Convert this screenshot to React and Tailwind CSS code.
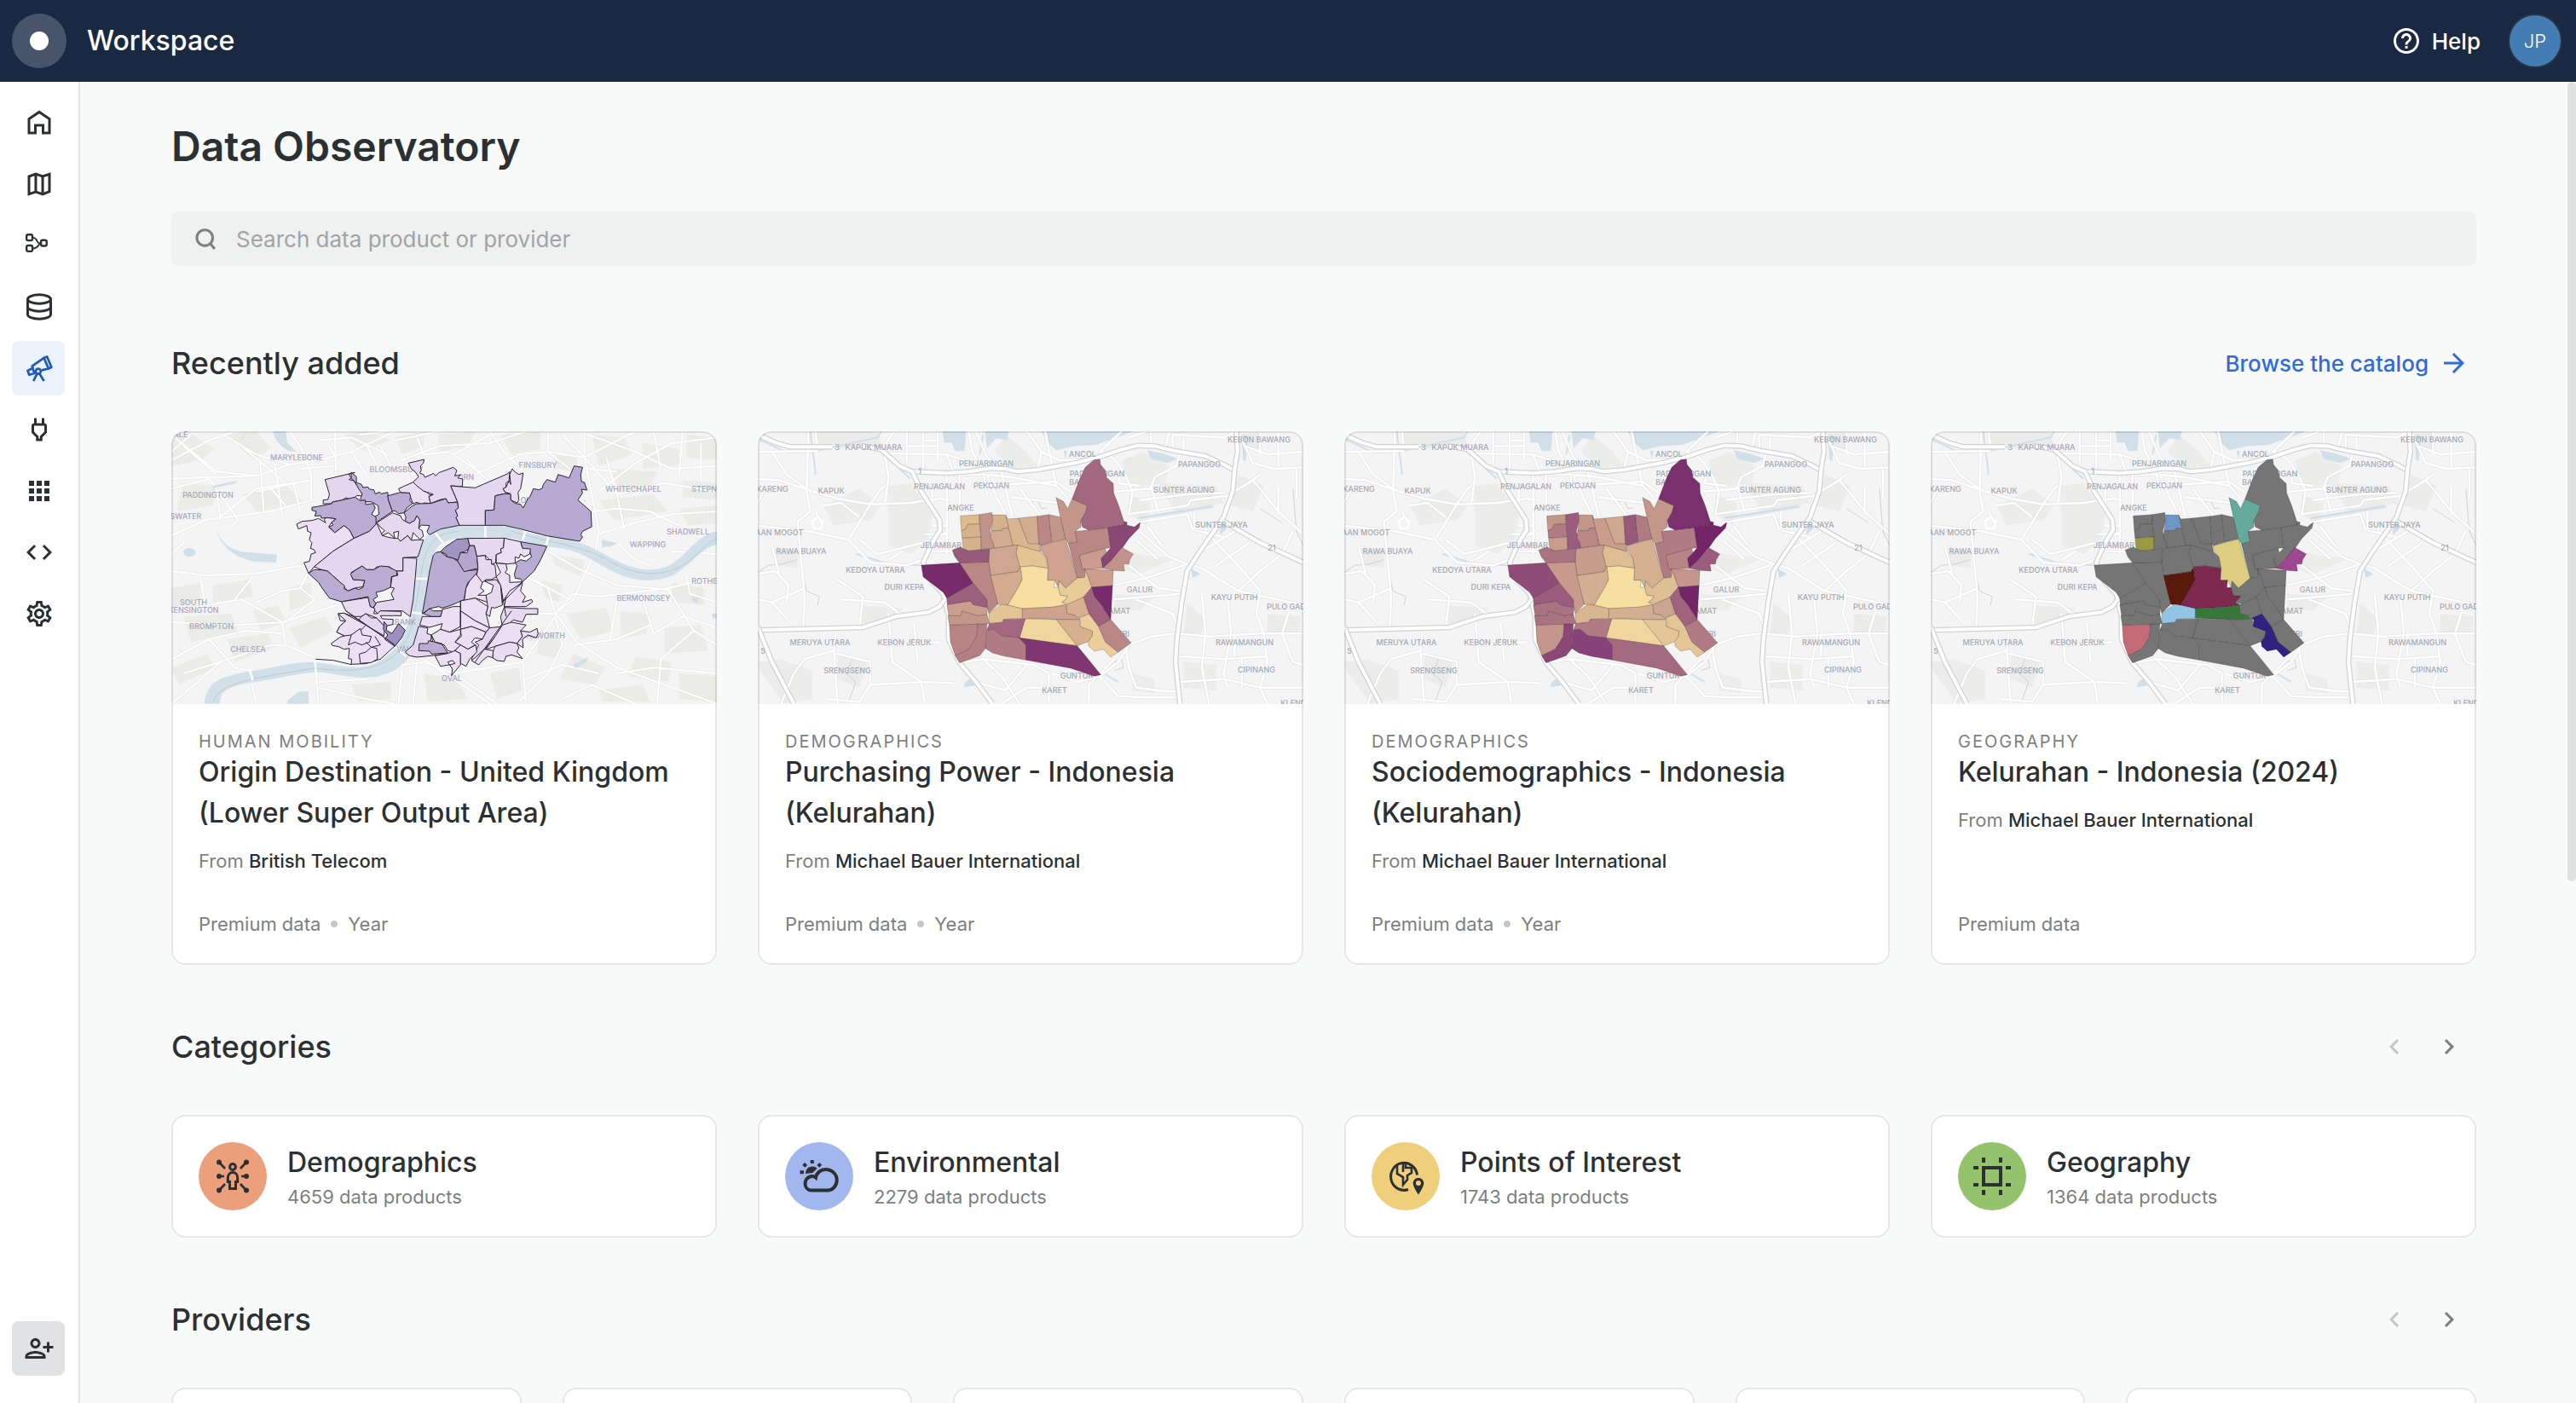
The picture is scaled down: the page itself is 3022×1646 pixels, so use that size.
import React, { useState } from 'react';
import {
  MdApps,
  MdArrowForward,
  MdChevronLeft,
  MdChevronRight,
  MdCode,
  MdHelpOutline,
  MdOutlinePower,
  MdOutlineSettings,
} from 'react-icons/md';

/* ---------- sidebar icons ---------- */

function StrokeIcon({ children }) {
  return (
    <svg viewBox="0 0 24 24" className="size-9" fill="none" stroke="currentColor" strokeWidth="2">
      {children}
    </svg>
  );
}

const HomeIcon = () => (
  <StrokeIcon>
    <path d="M4 20V9l8-5.4L20 9v11h-5v-6h-6v6z" />
  </StrokeIcon>
);

const MapIcon = () => (
  <StrokeIcon>
    <path d="M4 6 9.3 4l5.4 2L20 4.2v13.6L14.7 20l-5.4-2L4 19.8zM9.3 4v14M14.7 6v14" />
  </StrokeIcon>
);

const WorkflowIcon = () => (
  <StrokeIcon>
    <g strokeWidth="1.6">
      <rect x="2.1" y="3.5" width="4.6" height="4.6" rx="1.2" />
      <rect x="2.1" y="12" width="4.6" height="4.6" rx="1.2" />
      <rect x="13.4" y="7.8" width="4.4" height="4.5" rx="1.2" />
      <path strokeWidth="1.3" d="M7.400 5.900c3 0 2.800 4.200 4.300 4.200s-1.300 4.200-4.300 4.200M11.500 10.100h1.600" />
    </g>
  </StrokeIcon>
);

const DatabaseIcon = () => (
  <StrokeIcon>
    <ellipse cx="12" cy="6" rx="9" ry="3.5" />
    <path d="M3 6v12c0 1.9 4 3.5 9 3.5s9-1.6 9-3.5V6M3 12c0 1.9 4 3.5 9 3.5s9-1.6 9-3.5" />
  </StrokeIcon>
);

const TelescopeIcon = () => (
  <StrokeIcon>
    <g strokeWidth="1.8" strokeLinejoin="round">
      <path d="M15.7 3.9 18.1 3l3.5 8.2-2.3 1.100z" />
      <path d="M15.7 3.9 6.4 10.4l.9 2M13.8 13.6l5.5-1.3" />
      <path d="M6.8 12 2.9 13.9l1.3 3.3L8.3 16z" />
      <circle cx="11.2" cy="14.4" r="2" />
      <path d="M10.3 16.2 7.5 22M12.2 16.2 15.7 22" />
    </g>
  </StrokeIcon>
);

const InviteIcon = () => (
  <svg viewBox="0 0 24 24" className="size-9" fill="currentColor">
    <path d="M9 12c2.21 0 4-1.79 4-4s-1.79-4-4-4-4 1.79-4 4 1.79 4 4 4zm0-6c1.1 0 2 .9 2 2s-.9 2-2 2-2-.9-2-2 .9-2 2-2zm0 8c-2.67 0-8 1.34-8 4v2h16v-2c0-2.66-5.33-4-8-4zm-6 4c.22-.72 3.31-2 6-2 2.7 0 5.8 1.29 6 2H3zM20 10V7h-2v3h-3v2h3v3h2v-3h3v-2h-3z" />
  </svg>
);

const SearchIcon = () => (
  <StrokeIcon>
    <circle cx="11.5" cy="11.3" r="6.2" />
    <path d="m15.8 15.8 3.4 4.2" />
  </StrokeIcon>
);

/* ---------- category icons ---------- */

const DemographicsIcon = () => (
  <svg viewBox="0 0 48 48" className="size-12" fill="none" stroke="currentColor" strokeWidth="3">
    <circle cx="24" cy="13" r="3.4" />
    <path d="M24 19.5c-3.6 0-5.7 2.8-5.7 6.5v4.5h2.2v8h7v-8h2.2V26c0-3.7-2.1-6.5-5.7-6.5z" />
    <path d="M8 7.5l7 7.5M40 7.5 33 15M8 24h6M40 24h-6M8 40.5l7-7.5M40 40.5 33 33" strokeWidth="2.6" />
    <g fill="currentColor" stroke="none">
      <circle cx="8" cy="7.5" r="3" />
      <circle cx="40" cy="7.5" r="3" />
      <circle cx="8" cy="24" r="3" />
      <circle cx="40" cy="24" r="3" />
      <circle cx="8" cy="40.5" r="3" />
      <circle cx="40" cy="40.5" r="3" />
    </g>
  </svg>
);

const EnvironmentalIcon = () => (
  <svg viewBox="0 0 48 48" className="size-12" fill="none" stroke="currentColor" strokeWidth="4">
    <path d="M15 40.5c-4.5 0-7.5-3.3-7.5-8s3.5-8.5 8.500-8.5c1.800 0 3 .6 4 1.500C21 19.800 26 16 31.500 16 39 16 44.700 21.500 44.700 28.500S39.500 40.500 34 40.500z" />
    <path d="M8 21c0-5 3-8.500 8-8.500 2.300 0 4.300.8 5.500 2.200L16.500 20z" fill="currentColor" stroke="none" />
    <path d="M15.800 5v4M1.500 19.200h4.500M5.700 9.300l3 3M25.800 9.300l-3 3" />
  </svg>
);

const PoiIcon = () => (
  <svg viewBox="0 0 48 48" className="size-12" fill="none" stroke="currentColor" strokeWidth="3">
    <path d="M37.5 22.5A15.5 16 0 1 0 27 39.5" />
    <path d="M14 10v11l7 4v9l5-6v-5l5-3v-6h-7V8M21 8v11" strokeWidth="2.6" />
    <path
      d="M39 26c-3.7 0-6.3 2.7-6.3 6.2 0 4.3 6.3 13.3 6.3 13.3s6.3-9 6.3-13.3C45.3 28.7 42.7 26 39 26zm0 9a3 3 0 1 1 0-6 3 3 0 0 1 0 6z"
      fill="currentColor"
      stroke="none"
    />
  </svg>
);

const GeographyIcon = () => (
  <svg viewBox="0 0 48 48" className="size-12" fill="none" stroke="currentColor" strokeWidth="4">
    <path d="M14 14h20v20H14zM14 2v6M34 2v6M14 40v6M34 40v6M2 14h6M40 14h6M2 34h6M40 34h6" />
  </svg>
);

/* ---------- map previews ---------- */

function MapLabels({ labels, color }) {
  return (
    <g fill={color} fontSize="9" fontWeight="500" fontFamily="Inter, sans-serif" textAnchor="middle">
      {labels.map(([text, x, y], i) => (
        <text key={i} x={x} y={y}>
          {text}
        </text>
      ))}
    </g>
  );
}

const jakartaLabels = [
  ['3', 93, 22],
  ['KAPUK MUARA', 136, 22],
  ['KEBON BAWANG', 588, 13],
  ['ANCOL', 381, 30],
  ['PENJARINGAN', 268, 41],
  ['PAPANGGO', 518, 42],
  ['1', 190, 50],
  ['PADEMANGAN', 398, 53],
  ['BARAT', 380, 63],
  ['KARENG', 17, 71],
  ['KAPUK', 86, 73],
  ['PENJAGALAN', 213, 68],
  ['PEKOJAN', 274, 67],
  ['SUNTER AGUNG', 500, 72],
  ['ANGKE', 238, 93],
  ['SUNTER JAYA', 544, 113],
  ['DAAN MOGOT', 22, 122],
  ['JELAMBAR', 215, 137],
  ['RAWA BUAYA', 51, 144],
  ['21', 603, 140],
  ['KEDOYA UTARA', 138, 166],
  ['DURI KEPA', 172, 186],
  ['GALUR', 448, 189],
  ['KAYU PUTIH', 559, 198],
  ['KRAMAT', 418, 214],
  ['PULO GADUNG', 630, 209],
  ['MERUYA UTARA', 73, 251],
  ['KEBON JERUK', 172, 251],
  ['RAWAMANGUN', 571, 251],
  ['MATRI', 422, 241],
  ['5', 6, 261],
  ['SRENGSENG', 105, 284],
  ['GUNTUR', 374, 290],
  ['CIPINANG', 585, 283],
  ['KARET', 348, 307],
  ['KLENDER', 634, 322],
];

// district outlines, shared by the three Jakarta previews
const districts = {
  angke1: '577,346 629,341 630,374 597,376 592,392 580,398',
  angke2: '580,398 592,392 597,376 630,374 634,420 582,424',
  angke3: '582,424 634,420 634,464 600,469 585,462',
  duri: '629,341 664,334 666,360 658,400 668,440 670,460 634,464 634,420 630,374',
  tambora1: '666,342 702,343 710,388 694,390 692,397 662,399 666,360',
  tambora2: '662,399 692,397 694,390 710,388 722,450 670,460 668,440 660,425',
  tambora3: '702,343 707,357 737,354 752,405 764,443 793,444 797,472 735,449 722,450 710,388',
  glodok1: '737,354 788,347 793,444 764,443 752,405',
  glodok2: '788,347 820,341 828,438 797,451 793,444',
  mangga1: '820,341 852,350 866,427 828,438',
  mangga2: '840,281 860,295 872,320 884,286 926,310 920,335 908,362 908,385 892,400 898,437 874,444 866,427 852,350',
  ancol: '884,286 905,215 920,175 945,148 960,146 962,165 975,185 978,210 997,232 998,265 1012,310 1026,365 1028,377 982,388 930,396 912,385 908,362 920,335 926,310',
  sawah: '892,400 930,396 982,388 990,458 975,460 904,485 912,530 919,534 919,562 898,565 874,444 898,437',
  sunter: '982,388 1028,377 1026,365 1035,368 1034,378 1055,385 1071,368 1068,388 1040,425 1020,462 990,505 968,530 963,495 975,480 990,458',
  cempaka: '1020,457 1052,480 1042,500 1040,515 1025,515 1028,540 1000,538 968,530 990,505',
  utan: '904,485 975,460 978,475 963,495 968,530 912,534',
  gambir: '797,451 866,427 898,565 866,600 848,575 846,598 836,572 816,572 818,530 812,490 797,465',
  petojo: '735,449 797,472 812,490 818,530 775,522 740,525 730,475',
  cideng: '657,462 722,450 735,449 730,475 740,525 735,542 660,556 655,508',
  tanah: '660,556 735,542 742,525 747,570 735,600 707,660 680,657 668,610',
  kebon: '742,525 775,522 818,530 816,572 836,572 834,598 846,598 852,625 872,628 866,640 856,650 870,658 830,667 747,672 707,660 735,600 747,570',
  senen: '919,532 928,560 938,597 915,632 875,655 856,650 866,640 872,628 852,625 846,598 848,575 866,600 898,565 919,562',
  johar1: '919,532 997,538 995,591 938,597 928,560',
  johar2: '938,597 995,591 990,710 965,660 945,630',
  johar3: '938,597 945,630 965,660 990,710 956,735 930,690 915,632',
  matraman: '990,710 1046,793 1010,826 975,790 956,735',
  manggarai: '930,690 956,735 975,790 1010,826 990,843 970,815 945,822 930,805 928,788 938,770 940,752 905,735 908,712 902,705',
  cikini: '866,660 875,655 915,632 930,690 902,705 890,695 870,690',
  menteng: '747,672 830,667 868,658 870,690 890,695 905,710 840,710 747,706',
  bendungan: '655,688 690,657 707,660 747,672 747,706 696,710 694,720 657,725',
  karet: '755,708 840,710 898,803 738,775',
  guntur1: '840,710 905,712 905,735 940,752 938,770 928,788 898,803',
  gelora: '657,725 694,720 696,710 755,708 740,775 690,768 668,745 650,748',
  senayan1: '650,748 668,745 690,768 738,775 757,800 757,853 700,840 665,828 646,812',
  senayan2: '738,775 898,803 963,905 945,910 880,882 757,853 757,800',
  grogol1: '547,730 625,726 622,770 613,790 600,815 563,838 550,790',
  grogol2: '625,726 650,725 646,812 630,838 575,863 563,838 600,815 613,790 622,770',
  palmerah1: '543,697 578,697 582,680 625,697 650,692 657,725 547,730',
  palmerah2: '540,658 605,645 612,658 652,668 650,692 625,697 582,680 578,697 545,697',
  slipi: '540,635 612,582 650,640 652,668 612,658 605,645 542,658',
  kepa: '470,519 575,511 612,582 540,635 530,615 475,560',
  tomang: '575,511 655,508 660,556 680,657 655,688 652,668 650,640 612,582',
  jelambar: '555,466 578,455 585,462 600,469 657,462 655,508 575,511 562,490',
};

const purchasingColors = {
  angke1: '#debb8d', angke2: '#d6b18e', angke3: '#d6b18e', duri: '#c0938a', tambora1: '#d6b18e',
  tambora2: '#d2ac90', tambora3: '#d9b590', glodok1: '#d2ac8f', glodok2: '#b98785', mangga1: '#c49689',
  mangga2: '#c49689', ancol: '#a3687d', sawah: '#b98785', sunter: '#894774', cempaka: '#c1918a',
  utan: '#c99c8d', gambir: '#cfa28f', petojo: '#e4c494', cideng: '#cfa790', tanah: '#d3ac90',
  kebon: '#f6dea0', senen: '#e8cb98', johar1: '#cb9e8e', johar2: '#782b6b', johar3: '#a0627d',
  matraman: '#b98785', manggarai: '#ebce9b', cikini: '#d6b08f', menteng: '#cfa28f', bendungan: '#e4c494',
  karet: '#f0d69d', guntur1: '#d6b08f', gelora: '#a3677f', senayan1: '#b17b83', senayan2: '#803670',
  grogol1: '#b98485', grogol2: '#b47f83', palmerah1: '#c49689', palmerah2: '#cb9e8e', slipi: '#9c5f7d',
  kepa: '#782b6b', tomang: '#b98785', jelambar: '#985a7b',
};

const socioColors = {
  angke1: '#c49689', angke2: '#b17b83', angke3: '#c99c8c', duri: '#9c5c7d', tambora1: '#c49689',
  tambora2: '#b98785', tambora3: '#c99c8c', glodok1: '#cfa88f', glodok2: '#985a7b', mangga1: '#b17b83',
  mangga2: '#c4978b', ancol: '#7b306e', sawah: '#b17b83', sunter: '#742568', cempaka: '#9c5c7d',
  utan: '#b98485', gambir: '#d4af90', petojo: '#dfbd93', cideng: '#c89c8d', tanah: '#d4ae90',
  kebon: '#f6dea0', senen: '#dfbf94', johar1: '#c4968b', johar2: '#742568', johar3: '#a0627d',
  matraman: '#b17b83', manggarai: '#e4c598', cikini: '#cba48f', menteng: '#d4ae90', bendungan: '#d9b691',
  karet: '#f0d69d', guntur1: '#e4c598', gelora: '#b17b83', senayan1: '#87427a', senayan2: '#a46a80',
  grogol1: '#c4968b', grogol2: '#8c4776', palmerah1: '#aa7381', palmerah2: '#aa7381', slipi: '#9c5c7d',
  kepa: '#8f4c77', tomang: '#c89a8d', jelambar: '#aa7381',
};

const geographyColors = {
  angke3: '#999a43', tambora1: '#7096c8', mangga2: '#63aa9a', cempaka: '#9c4790', gambir: '#dccd80',
  tanah: '#5b190b', kebon: '#7d2950', menteng: '#38773a', bendungan: '#92c4e8', manggarai: '#32227f',
  grogol1: '#c26a76',
};

const jakartaStreets = [
  'M21 215 80 220 160 255 240 285 330 305 360 250 370 240',
  'M160 48 155 260 165 330 130 365',
  'M185 110 180 48M21 120 185 118',
  'M330 305 440 300 520 285 545 290',
  'M330 305 270 430 160 400 21 380',
  'M270 430 330 510 430 520 475 500',
  'M300 430 350 480 475 440',
  'M21 550 70 540 105 590 100 650',
  'M130 365 140 500 150 640 145 750',
  'M240 570 310 630 300 735',
  'M250 640 370 650 420 700',
  'M21 640 60 650 110 720M60 650 150 600',
  'M85 1007 120 900 150 850 230 820 235 760',
  'M230 820 240 1007M235 830 330 860 330 940 480 930 560 935',
  'M380 690 390 860 470 930 480 1007M390 800 520 790',
  'M330 940 300 1000 210 990M450 720 460 860',
  'M430 48V160M475 48V190M515 48V150M475 80H515M430 100H515M360 125 540 130 590 150',
  'M370 130 380 210 370 300M395 48 360 115',
  'M600 48 610 120 640 190 650 270M620 48 650 140 690 180',
  'M540 130 560 200 640 200 720 210 840 240',
  'M500 230V300M540 200V480M575 200V340M500 380 540 380M500 470 550 470M480 410H540',
  'M650 200 680 290 705 350M690 190 720 350M720 280 845 300M740 250 800 350',
  'M640 240 840 225 880 260M810 48 840 240 870 280',
  'M760 48 800 120 850 150 950 145M800 120 790 180',
  'M1020 48 960 120 1000 145 1020 180 1010 230 1070 240',
  'M1040 70 1090 48M1100 100 1100 48M1140 110 1150 48',
  'M1160 60 1300 70 1330 50M1160 60V110M1190 70V115',
  'M1000 260 1100 250 1110 210 1170 170 1180 125',
  'M1030 200 1050 260 1040 340M1040 340 1200 310 1210 290 1310 275',
  'M1060 370 1200 340 1215 395 1300 420M1100 240 1120 330',
  'M1220 330V390M1070 290 1200 270 1300 265',
  'M1070 400 1150 490 1200 515M1090 380 1130 450M1060 430 1120 500',
  'M1200 515 1100 560 1000 590M1200 515 1240 530 1340 610 1519 660',
  'M1040 520 1120 600 1180 610M1000 640 1180 620',
  'M1340 610 1400 540 1460 480 1490 400M1300 370 1310 275 1380 220 1400 200',
  'M1340 50 1380 160 1440 180 1519 175M1360 100 1420 130 1519 120M1400 48V130M1450 48V170',
  'M1380 220 1450 330 1519 410M1450 240V340M1500 180V280',
  'M1250 400 1340 520 1400 610M1240 470 1330 400M1280 520 1370 440',
  'M1060 640 1160 690 1180 760M1040 800 1100 770 1170 760 1260 770 1400 760 1519 760',
  'M1240 620 1250 760 1240 880 1260 1007M1310 620 1320 760 1300 900 1310 950',
  'M1400 610 1390 690 1410 760 1420 860 1400 950 1420 1007M1480 680 1460 760 1490 860 1519 870',
  'M1180 840 1300 850 1420 840M1180 930 1300 920 1400 950 1519 950M1330 760V840M1350 850V950',
  'M1030 800 1040 880 1060 950 1120 960 1180 965M1000 850 930 940 930 1007',
  'M575 863 640 850 780 870 820 900 820 1007M640 850 690 910 740 1007',
  'M620 930 700 960 740 900 760 870M690 1007 760 950 830 950',
  'M830 900 900 930 960 910 1010 860 1040 800M960 910 1010 980 1090 985 1180 985',
  'M545 400 500 430M380 500 420 470M60 120 100 200 160 255',
  'M200 310 250 300 300 350M40 250 21 300M60 450 80 550M180 330 200 380',
];

const jakartaHighways = [
  'M21 60 70 88 110 103 225 103M300 98 360 112 410 170 445 190 540 195 600 190 660 178 700 180 735 190 790 183 890 160 960 138 1020 112 1065 98 1110 100 1170 118 1250 135 1300 165 1330 185',
  'M445 190 470 260 520 360 522 395 500 440 475 510 500 580 530 620 545 700 545 780 575 863 620 930 665 1007',
  'M21 748 120 745 310 738 400 700 490 685 520 665 535 640',
  'M1335 48 1338 120 1330 185 1325 260 1300 350 1230 480 1200 540 1185 650 1172 780 1168 860 1180 1007',
  'M1300 365 1400 440 1519 510',
  'M21 735 60 860 120 1007',
];

function JakartaMap({ title, colors }) {
  return (
    <svg viewBox="0 0 640 320" className="block w-full" role="img" aria-label={title}>
      <rect width="640" height="320" fill="#f4f4f4" />
      <g transform="scale(.4273 .3333) translate(-21 -48)" fill="none" strokeLinejoin="round">
        <g fill="#ececea">
          <path d="M180 48h170l10 50-120 10-60-15zM200 310l100-60 60 60-30 50-100 20zM380 240l60-10 60 110-10 90-50 50-60-30zM60 460l70 10v60l-60-10zM21 860l60-10 90 40v100l-80 17-70-130z" />
          <path d="M1020 150l60-30 70 50-10 60-100 20zM1120 230l160 10 20 60-130 40zM1040 270l60 30-10 80-50-40zM1180 490l-110 60-60-20 30-60 60 20zM1340 200l70 40-30 90-60-20zM1200 650l50 60-10 50h-50zM1190 860l90 10v90l-90-10zM1420 690l90 10v60h-90zM1340 60l60-10v60h-50z" />
          <path d="M700 60l60 60 30 50-70 10-50-60zM300 660l120 10-30 40-80 20zM240 830l80 30-20 90-60-30zM1000 620l110 10-40 50-70-10zM1050 900l60 20v50l-60-10z" />
        </g>
        <g fill="#d1dfe8">
          <path d="M528 48h65l-5 70h-25l-10-30h-20zM645 48h65l-5 30-30-5-25 35zM800 48h250l-50 25-50 22-60 5-50 15-25-30zM1090 115l40 10 45 20-30 15-45-15zM1065 350l200-42 10 8-210 42zM1290 370l25 10-25 35zM1210 530l25 20-20 15zM590 930l15-12 12 25-30 5zM1475 840l22 20-5 10z" />
          <path d="M1352 60l16 5-8 90-8-10zM860 115l10 5-5 25z" />
        </g>
        <path
          vectorEffect="non-scaling-stroke"
          stroke="#d1dfe8"
          strokeWidth="2"
          d="M21 75 100 122 170 120 350 70 360 48M360 120 440 215M290 480 380 515 470 520M165 48 180 200M640 60 630 130M970 900 1010 930"
        />
        <path
          vectorEffect="non-scaling-stroke"
          stroke="#cbd2d6"
          d="M21 545 50 520 90 515 130 500M150 580 155 610 190 630 185 660M740 285 760 280 775 295 790 290 800 320 815 318M1000 860 1020 850 1025 880 1000 890M280 850 265 900 290 930 270 1000M1400 320 1460 370M1490 250 1500 400 1519 450"
        />
        <g stroke="#dcdcdc" strokeWidth="4">
          {jakartaStreets.map((d, i) => (
            <path key={i} d={d} vectorEffect="non-scaling-stroke" opacity=".6" />
          ))}
        </g>
        <g stroke="#ffffff" strokeWidth="2.5">
          {jakartaStreets.map((d, i) => (
            <path key={i} d={d} vectorEffect="non-scaling-stroke" />
          ))}
          <path d="M170 365 185 350 200 365 195 390 175 390z" vectorEffect="non-scaling-stroke" />
        </g>
        {jakartaHighways.map((d, i) => (
          <g key={i}>
            <path d={d} stroke="#d2d2d2" strokeWidth="6.5" vectorEffect="non-scaling-stroke" />
            <path d={d} stroke="#ffffff" strokeWidth="4" vectorEffect="non-scaling-stroke" />
          </g>
        ))}
      </g>
      <MapLabels labels={jakartaLabels} color="#a2a8b2" />
      <g transform="scale(.4273 .3333) translate(-21 -48)" strokeLinejoin="round" stroke="#00000033">
        {Object.entries(districts).map(([name, points]) => (
          <polygon key={name} points={points} fill={colors[name] || '#757575'} vectorEffect="non-scaling-stroke" />
        ))}
      </g>
    </svg>
  );
}

const londonLabels = [
  ['VALE', 8, 7],
  ['MARYLEBONE', 147, 34],
  ['BLOOMSBURY', 264, 48],
  ['FINSBURY', 430, 43],
  ['HOLBORN', 333, 57],
  ['PADDINGTON', 43, 78],
  ['WHITECHAPEL', 542, 71],
  ['STEPNEY', 631, 71],
  ['LONDON', 424, 84],
  ['BAYSWATER', 8, 103],
  ['SHADWELL', 606, 121],
  ['WAPPING', 559, 136],
  ['ROTHERHITHE', 642, 179],
  ['SOUTH', 26, 204],
  ['KENSINGTON', 26, 213],
  ['BERMONDSEY', 554, 199],
  ['BROMPTON', 47, 232],
  ['MILLBANK', 264, 227],
  ['WALWORTH', 435, 243],
  ['CHELSEA', 90, 259],
  ['VAUXHALL', 288, 259],
  ['OVAL', 329, 293],
];

// [fill, outline] for every output area
const outputAreas = [
  ['#e4d6ee', '448,218 530,193 513,200 520,212 514,218 527,222 535,238 545,250 552,276 535,274 522,290 505,282 495,290 468,297 466,303 443,303 443,290 456,288 460,270'],
  ['#bdb1d7', '520,192 534,208 534,228 548,235 552,246 566,244 570,252 582,254 586,268 598,262 602,268 620,263 622,290 633,330 600,358 585,372 580,352 596,340 594,310 575,296 552,296 545,286 550,268 540,250 530,225 520,215'],
  ['#b8acd3', '412,316 430,312 466,303 468,297 495,290 530,280 545,292 558,290 560,306 580,302 586,318 576,340 588,350 588,375 570,400 527,425 515,395 500,380 475,405 466,392 458,385 470,378 466,368 478,356 452,352 438,354 436,345 420,346 424,330 412,326'],
  ['#b8acd3', '620,275 655,263 680,265 685,275 680,290 688,302 672,318 665,335 650,338 640,328 633,330 622,290'],
  ['#ecdff3', '650,250 690,227 700,240 712,245 718,258 727,262 735,272 745,270 733,278 738,302 720,300 714,306 700,298 690,303 684,285 680,265 655,263'],
  ['#e4d6ee', '677,160 720,147 718,160 710,170 712,185 708,195 718,200 722,210 740,200 745,196 752,205 760,194 800,175 810,186 804,205 820,202 812,212 826,216 825,242 793,240 812,297 786,300 780,285 765,288 738,302 733,278 745,270 727,262 718,258 700,240 690,227 705,208 695,190 685,180'],
  ['#c0b4da', '665,335 688,310 700,303 738,302 780,285 786,300 812,297 814,318 806,326 812,345 808,352 817,379 765,392 735,412 728,402 735,380 712,378 705,390 708,360 700,345 694,362 680,372 668,365 670,350'],
  ['#e4d6ee', '793,240 860,247 950,197 955,190 953,222 945,230 945,245 937,250 942,262 957,268 940,268 915,275 912,325 888,327 888,379 817,379 808,352 812,345 806,326 814,318 812,297'],
  ['#e9dcf1', '962,180 970,192 980,200 992,195 985,250 978,262 980,290 975,300 958,290 957,268 942,262 937,250 945,245 953,222 958,235 955,200'],
  ['#b6aad2', '888,379 888,327 912,325 915,275 940,268 957,268 958,290 970,302 985,305 992,318 1005,285 1010,280 1020,250 1035,254 1045,248 1046,238 1057,218 1080,227 1088,200 1118,212 1132,170 1155,175 1150,200 1152,225 1160,228 1167,255 1152,252 1155,265 1142,290 1178,330 1180,384 1155,400 1150,412 1155,420 1147,435 1057,416 985,392 940,379'],
  ['#e6d9ef', '590,370 633,335 655,345 660,358 668,365 680,372 694,362 700,345 708,360 705,390 715,398 718,418 708,428 690,405 685,432 675,415 655,435 648,425 650,400 636,404 640,425 622,405 605,415 603,408 612,398 600,385'],
  ['#ecdff3', '370,375 385,365 412,362 430,355 450,370 445,358 452,352 478,356 466,368 458,385 475,405 500,380 515,395 527,425 470,470 418,525 403,548 390,510 405,506 410,480 422,475 418,465 408,460 412,440 405,430 410,405 400,400 398,380 375,392'],
  ['#e4d6ee', '418,525 470,470 527,425 570,400 590,372 605,415 625,422 640,425 648,425 655,435 675,415 685,432 700,430 718,430 703,490 662,493 662,540 640,540 625,525 590,525 582,535 562,535 550,522 520,545 525,570 557,573 552,595 530,600 510,610 490,580 455,540 440,536'],
  ['#b8acd3', '403,548 418,535 440,536 455,540 490,580 502,592 500,602 512,610 530,600 540,605 552,598 557,573 525,570 518,550 530,538 550,522 562,535 582,535 600,522 620,524 645,540 645,555 630,560 628,597 610,608 588,615 592,630 580,640 588,655 578,672 568,655 566,630 493,648 460,635 440,600 430,580'],
  ['#e4d6ee', '662,493 700,495 696,560 690,640 682,700 660,680 600,680 592,690 580,672 590,650 637,640 630,620 638,600 628,597 632,560 648,555 645,540 662,540'],
  ['#e9dcf1', '493,648 566,633 572,665 585,672 582,690 592,690 600,680 657,682 657,697 600,697 605,708 635,710 634,728 610,735 600,720 590,705 560,690 548,700 528,700 505,680'],
  ['#ecdff3', '484,690 500,688 525,700 560,730 605,768 640,803 600,850 560,866 520,868 521,850 512,848 515,812 500,815 485,806 468,802 465,795 490,772 502,768 480,755 488,735 505,715 490,715'],
  ['#e4d6ee', '560,690 575,705 590,705 600,720 612,735 610,768 575,742 540,712 548,700'],
  ['#ecdff3', '542,832 560,825 575,808 590,812 592,850 575,862 545,865'],
  ['#9d90c1', '610,718 618,730 616,748 632,760 650,725 668,748 658,775 640,805 612,780 620,765 608,745'],
  ['#a094c3', '765,472 778,455 810,428 840,425 845,450 840,465 830,472 820,475 815,502 800,495 783,490 780,480'],
  ['#b8acd3', '752,475 765,472 783,490 800,495 812,505 830,540 868,535 860,560 840,580 835,600 830,640 795,660 770,670 760,665 735,672 715,690 725,620 735,540 745,485'],
  ['#b3a7cf', '845,450 858,450 865,490 868,530 830,542 812,505 820,475 838,476'],
  ['#e6d9ef', '840,425 940,424 938,458 930,462 932,475 918,482 916,512 905,515 900,500 888,485 865,488 858,450 845,450'],
  ['#e6d9ef', '865,488 888,485 890,500 905,500 905,515 915,520 918,560 905,570 890,570 880,580 862,570 868,530'],
  ['#b8acd3', '985,437 1057,453 1040,500 1022,540 990,578 985,568 970,565 968,550 975,520 970,512 985,500 1000,505 1015,490 1010,470 990,460'],
  ['#ecdff3', '940,424 985,437 990,460 1012,462 1010,480 995,490 985,480 980,495 970,490 970,512 950,515 918,512 918,482 932,475 930,462 938,458'],
  ['#ecdff3', '918,512 945,515 948,535 942,545 955,555 955,580 990,578 970,600 945,630 935,650 930,590 918,560 930,545'],
  ['#ecdff3', '862,550 880,580 875,600 885,610 868,625 890,625 895,650 860,635 830,645 835,600 845,575'],
  ['#e6d9ef', '885,575 918,570 930,590 935,660 915,670 905,668 900,700 890,690 895,665 890,625 905,615 910,590'],
  ['#ecdff3', '955,610 990,580 985,610 998,630 990,650 1015,640 1018,648 1000,665 940,665 945,630'],
  ['#e6d9ef', '1000,672 1032,672 1032,692 1000,692 990,720 965,712 950,730 935,735 930,700 940,668'],
  ['#ecdff3', '820,645 860,635 895,665 890,690 900,740 860,715 820,680'],
  ['#ecdff3', '715,700 765,700 770,675 800,665 820,665 820,735 790,755 765,745 770,725 735,738 708,730'],
  ['#ecdff3', '820,680 860,715 900,740 890,755 850,735 820,745'],
  ['#b8acd3', '718,690 735,672 745,680 770,680 765,700 740,700'],
  ['#e4d6ee', '705,735 730,740 728,760 740,765 738,790 750,800 765,795 785,830 740,838 700,843 680,838 668,825 690,800'],
  ['#ecdff3', '740,765 765,745 790,755 820,745 820,765 805,790 820,800 800,825 785,820 775,800 745,795'],
  ['#ecdff3', '820,745 850,735 890,755 880,780 860,775 850,790 860,800 840,815 820,800 805,790 822,770'],
  ['#e4d6ee', '890,755 900,740 935,735 915,770 890,810 860,860 850,850 870,800 860,790 880,780'],
  ['#ecdff3', '935,730 960,720 1000,730 985,750 990,770 975,795 955,790 915,805 890,815 915,770'],
  ['#ecdff3', '985,750 1010,755 1030,742 1033,760 1028,775 1005,765 990,780 992,810 975,795 990,770'],
  ['#e9dcf1', '915,805 955,790 975,795 980,810 975,825 990,848 960,835 945,840 940,858 920,855 908,845 910,820'],
  ['#ecdff3', '885,815 910,820 908,845 895,840 880,855 870,870 850,855 860,845'],
  ['#ecdff3', '750,838 785,830 805,820 820,830 820,870 810,885 795,908 798,885 790,870 805,865 798,855 785,860 790,870 765,875'],
  ['#ecdff3', '820,800 840,815 862,800 865,825 845,850 835,875 820,865 820,830 805,820'],
  ['#b8acd3', '707,795 730,795 732,785 768,795 778,815 785,828 740,832 735,822 705,820'],
  ['#ecdff3', '484,690 500,688 560,730 545,750 520,765 502,768 480,755 488,735 505,715'],
  ['#ecdff3', '520,765 545,742 550,765 575,770 570,790 548,800 530,790 512,800'],
];

const londonStreets = [
  'M26 215 120 210 260 205 350 165 430 150 520 120 640 48',
  'M26 415 120 360 300 330 410 290 410 200 380 100 350 48',
  'M26 250 130 215 210 360 190 380M150 250 160 350 260 250 360 230',
  'M26 150 130 80 200 48M60 100 150 200M80 60 26 120M26 60 150 190 260 205',
  'M170 60 260 130 350 165M210 90 340 230M475 48 478 200M520 120 560 200',
  'M300 250 340 310M260 260 330 240 410 220M270 150 280 330M310 160 330 340M360 220 380 330',
  'M430 80 520 70 620 130M560 90 590 170M600 100 640 200M540 60 620 48',
  'M700 70 720 130 790 120 870 190M640 80 760 48M660 150 760 100 900 90 1000 48',
  'M800 130 900 60M840 150 900 230M860 200 980 130 1060 120 1160 140 1300 48',
  'M900 48 940 120 1000 200M1060 48 1060 120 1120 180M1100 60 1160 140 1200 400',
  'M1160 48V140L1250 270 1380 230 1524 260M1200 260 1300 160 1400 90 1524 70',
  'M1170 60 1300 120 1400 180 1524 170M1350 48 1370 180M1430 48 1420 200M1480 90V220',
  'M1200 410 1300 370 1400 340 1524 330M1170 180 1250 190M1220 140 1250 270 1270 400',
  'M1180 330 1250 320 1340 330 1420 380M1200 400 1190 470 1130 640 1080 690',
  'M1080 690 1000 690M1080 690 1130 620 1200 630 1390 600 1524 560M1080 690 1140 790 1250 880 1524 1007',
  'M1060 470 1140 530 1250 590 1390 605M1000 560 1060 600 1080 690M1020 570 1120 640',
  'M26 540 120 555 250 550 390 520M105 555 120 660 26 690M120 660 220 640 330 720 340 800 430 850',
  'M26 720 200 730 340 720 420 640 380 600 400 550M200 640 250 560M260 650 330 610 380 600',
  'M26 850 130 780 230 750 330 760M130 780 200 880 240 890M60 900 160 860 300 800 340 800',
  'M26 1007 90 940 160 860M240 900 260 1007M330 720 480 660M420 860 430 1007',
  'M430 950 560 990 640 1007M430 930 560 920 660 870 720 860 800 900 990 860 1080 700',
  'M660 870 650 1007M700 860 690 1007M720 850 900 1007M800 900 870 960 920 1007',
  'M990 850 1000 1007M1080 700 1100 800 1060 900 980 1000M1000 920 1100 870 1200 900',
  'M1130 800 1250 780 1340 730M1250 640 1230 780M1320 640 1350 760 1430 700 1524 740',
  'M1390 605 1460 750 1524 800M1460 750 1370 850 1360 1007M1250 900 1350 880 1524 900',
  'M1100 990 1180 940 1300 1007M1440 560 1450 620 1524 650M1250 440 1300 500 1340 520',
  'M1400 470 1524 480M460 100 480 150M60 440 26 480M380 180 470 170M620 200 700 150',
];

const cityBlocks =
  'M26 60h60l60 50-40 40-80 20zM180 60l80-12 40 60-50 40zM500 60l60-12 70 30-80 40zM60 230l90 10-10 70-100 20zM220 270l120-30 50 60-130 30zM640 70l80-20v50l-60 30zM760 60l100-10-20 50-80 20zM930 60l110-10v60l-80 20zM1080 130l60 10v50l-60-10zM1180 60l90 10 20 60-90 40zM1320 90l100 20v60l-100 10zM1440 60l84 10v80l-84-10zM1230 180l130 10-20 60-80 10zM1430 220l94 10v60l-94-10zM1200 290l150-20 40 60-150 30zM1420 320l104-10v60l-80 10zM26 600l80-20v60l-80 30zM140 590l100-20 10 60-110 20zM60 700l130-10 20 70-130 30zM250 680l70-20 20 60-70 30zM180 780l110-20 20 50-110 50zM26 880l100-50 20 50-100 60zM350 600l60-20v70l-60 30zM350 740l100-40 20 50-90 60zM1040 570l60 20-10 60-40-20zM1110 690l110-20 20 80-90 30zM1260 680l80 10-10 70-70 20zM1400 580l90 20v60l-90-10zM1380 740l100-10 20 90-120 10zM1040 740l60 40-20 70-50-20zM1130 830l90 50-30 60-100-20zM1300 840l100 20-10 70-110-20zM720 900l90 20 30 70-110 10zM900 900l80-20 10 80-70 30zM520 940l110-10v60l-90 10zM1200 960l120-20 20 60h-130zM1420 900l104 10v90l-104-10zM1070 480l90 20-10 60-70-40z';

function LondonMap({ title }) {
  return (
    <svg viewBox="0 0 640 320" className="block w-full" role="img" aria-label={title}>
      <rect width="640" height="320" fill="#f4f4f4" />
      <g transform="scale(.4273 .3333) translate(-26 -48)" fill="none" strokeLinejoin="round">
        <path d={cityBlocks} fill="#ebebe7" />
        <g stroke="#dfdfdd" strokeWidth="3.5">
          {londonStreets.map((d, i) => (
            <path key={i} d={d} vectorEffect="non-scaling-stroke" opacity=".5" />
          ))}
        </g>
        <g stroke="#ffffff" strokeWidth="2">
          {londonStreets.map((d, i) => (
            <path key={i} d={d} vectorEffect="non-scaling-stroke" />
          ))}
        </g>
        <path
          fill="#d1dfe8"
          d="M150 392c12 50 40 80 90 82l76 8-2 28-60-4c-50-12-94-50-104-114zM58 470c10-18 30-12 34 2s-16 22-28 14zM305 48h35l4 40 26 32-20-2c-28-20-40-40-45-70zM140 240l66-18-4 10-62 16zM345 995l30-30 28-3v45h-58zM1130 870l40-28-4 18-30 22zM1208 430l44 12-20 12-24 2zM1455 630l20 4-4 18-14-4zM1510 690h14v20l-12-6zM232 50l-10 25-25 10 20-8z"
        />
        {/* Thames */}
        <path
          d="M116 1007c10-80 40-95 130-115 100-20 130-42 210-25 90 20 130 20 190-62 40-60 40-200 58-320 12-90 60-106 150-106 100 0 100 6 150 25 70 25 110 15 170 50 70 45 130 100 200 75 60-20 90-120 150-128v45c-60 20-80 100-150 122-90 20-140-30-210-80-60-40-90-22-165-50-60-25-80-15-150-15-60 0-100 10-110 90-14 110-20 250-60 330-60 100-160 70-230 55-50-8-130 22-220 38-50 12-70 30-70 71z"
          fill="#d1dfe8"
        />
        <path
          d="M140 1000C160 930 260 915 420 882 640 920 670 800 690 720L716 520C730 420 770 405 815 400M960 400C1060 440 1160 450 1230 505S1380 560 1430 520 1490 440 1524 425"
          stroke="#bccad3"
          vectorEffect="non-scaling-stroke"
        />
        <path
          vectorEffect="non-scaling-stroke"
          stroke="#ffffff"
          strokeWidth="2.5"
          d="M750 405 772 440M888 379V424M998 400 990 432M1062 415 1055 450M690 567H728M676 684 715 690M420 850 424 910M640 805 670 840M240 885 250 925"
        />
      </g>
      <MapLabels labels={londonLabels} color="#a5a6bd" />
      <g transform="scale(.4273 .3333) translate(-26 -48)" stroke="#2a2433" strokeLinejoin="round">
        {outputAreas.map(([fill, points], i) => (
          <polygon key={i} points={points} fill={fill} vectorEffect="non-scaling-stroke" />
        ))}
        <path d="M422 850 470 854 520 869" fill="none" vectorEffect="non-scaling-stroke" />
        <path
          d="M505 680 528 700 640 800M935 650 990 580M860 860 960 680M820 645V735M930 590 945 700M585 770 600 800 575 808 560 790M740 765 750 790 775 800"
          fill="none"
          vectorEffect="non-scaling-stroke"
        />
      </g>
    </svg>
  );
}

/* ---------- page data ---------- */

const navItems = [
  { label: 'Home', icon: <HomeIcon /> },
  { label: 'Maps', icon: <MapIcon /> },
  { label: 'Workflows', icon: <WorkflowIcon /> },
  { label: 'Data Explorer', icon: <DatabaseIcon /> },
  { label: 'Data Observatory', icon: <TelescopeIcon />, active: true },
  { label: 'Connections', icon: <MdOutlinePower className="size-9" /> },
  { label: 'Applications', icon: <MdApps className="size-9" /> },
  { label: 'Developers', icon: <MdCode className="size-9" /> },
  { label: 'Settings', icon: <MdOutlineSettings className="size-9" /> },
];

const products = [
  {
    category: 'Human mobility',
    name: 'Origin Destination - United Kingdom (Lower Super Output Area)',
    provider: 'British Telecom',
    tags: ['Premium data', 'Year'],
    map: <LondonMap title="London preview" />,
  },
  {
    category: 'Demographics',
    name: 'Purchasing Power - Indonesia (Kelurahan)',
    provider: 'Michael Bauer International',
    tags: ['Premium data', 'Year'],
    map: <JakartaMap title="Purchasing power preview" colors={purchasingColors} />,
  },
  {
    category: 'Demographics',
    name: 'Sociodemographics - Indonesia (Kelurahan)',
    provider: 'Michael Bauer International',
    tags: ['Premium data', 'Year'],
    map: <JakartaMap title="Sociodemographics preview" colors={socioColors} />,
  },
  {
    category: 'Geography',
    name: 'Kelurahan - Indonesia (2024)',
    provider: 'Michael Bauer International',
    tags: ['Premium data'],
    map: <JakartaMap title="Kelurahan preview" colors={geographyColors} />,
  },
];

const categories = [
  { name: 'Demographics', count: 4659, color: 'bg-[#ec9f7b]', icon: <DemographicsIcon /> },
  { name: 'Environmental', count: 2279, color: 'bg-[#a3b7ef]', icon: <EnvironmentalIcon /> },
  { name: 'Points of Interest', count: 1743, color: 'bg-[#f0cf7c]', icon: <PoiIcon /> },
  { name: 'Geography', count: 1364, color: 'bg-[#95c36d]', icon: <GeographyIcon /> },
];

/* ---------- components ---------- */

function Header() {
  return (
    <header className="flex h-24 shrink-0 items-center bg-[#1a2942] pr-[18px] pl-3.5 text-white">
      <a href="#" aria-label="Workspace home" className="flex size-16 items-center justify-center rounded-full bg-[#48546a]">
        <span className="size-[22px] rounded-full bg-white" />
      </a>
      <span className="ml-6 text-[32px] font-medium">Workspace</span>
      <button type="button" className="ml-auto flex items-center gap-3 text-[26px] font-medium">
        <MdHelpOutline className="size-9" />
        Help
      </button>
      <button
        type="button"
        className="ml-[34px] flex size-[60px] items-center justify-center rounded-full bg-[#437db4] text-[22px] font-light ring-2 ring-[#263445]"
      >
        JP
      </button>
    </header>
  );
}

function Sidebar() {
  return (
    <nav className="flex w-[94px] shrink-0 flex-col gap-2 border-r-2 border-[#e4e6e6] bg-white pt-4 pr-4 pb-8 pl-3.5">
      {navItems.map(item => (
        <a
          key={item.label}
          href="#"
          aria-label={item.label}
          className={`flex h-16 items-center rounded-lg pl-3.5 ${
            item.active ? 'bg-[#ebf2fb] text-[#2059b5]' : 'text-[#2c3032]'
          }`}
        >
          {item.icon}
        </a>
      ))}
      <button
        type="button"
        aria-label="Invite users"
        className="mt-auto flex h-16 items-center rounded-lg bg-[#e1e2e4] pl-3.5 text-[#2c3032]"
      >
        <InviteIcon />
      </button>
    </nav>
  );
}

function ProductCard({ product }) {
  return (
    <article className="relative flex flex-col overflow-hidden rounded-2xl bg-white after:pointer-events-none after:absolute after:inset-0 after:rounded-2xl after:border-2 after:border-black/10">
      {product.map}
      <div className="flex flex-1 flex-col p-8">
        <p className="text-xl leading-6 tracking-widest text-[#7d7f80] uppercase">{product.category}</p>
        <h3 className="text-[32px] leading-12 font-medium">{product.name}</h3>
        <p className="mt-4 text-[22px] leading-8 text-[#7d7f80]">
          From <span className="font-medium text-[#2c3032]">{product.provider}</span>
        </p>
        <ul className="mt-auto flex items-center gap-3 pt-[42px] text-[22px] leading-8 text-[#7d7f80]">
          {product.tags.map((tag, i) => (
            <li key={tag} className="flex items-center gap-3">
              {i > 0 && <span className="size-2 rounded-full bg-[#c5c7c7]" />}
              {tag}
            </li>
          ))}
        </ul>
      </div>
    </article>
  );
}

function SectionHeader({ title, children }) {
  return (
    <div className="mb-12 flex h-16 items-center justify-between">
      <h2 className="text-4xl font-medium">{title}</h2>
      {children}
    </div>
  );
}

function Pager({ label }) {
  return (
    <div className="flex">
      <button
        type="button"
        disabled
        aria-label={`Previous ${label}`}
        className="flex size-16 items-center justify-center text-[#c5c7c7]"
      >
        <MdChevronLeft className="size-9" />
      </button>
      <button
        type="button"
        aria-label={`Next ${label}`}
        className="flex size-16 items-center justify-center text-[#7d7f80]"
      >
        <MdChevronRight className="size-9" />
      </button>
    </div>
  );
}

export default function App() {
  const [query, setQuery] = useState('');

  return (
    <div className="flex h-screen flex-col bg-[#f8faf9] font-['Inter',sans-serif] text-[#2c3032]">
      <Header />
      <div className="flex min-h-0 flex-1">
        <Sidebar />
        <main className="min-w-0 flex-1 overflow-hidden">
          <div className="mx-auto max-w-[2704px] pt-12">
            <h1 className="text-5xl leading-14 font-semibold">Data Observatory</h1>

            <label className="mt-12 flex h-16 items-center gap-[18px] rounded-lg bg-[#eff1f0] px-[22px] text-[#7d7f80]">
              <SearchIcon />
              <input
                type="text"
                aria-label="Search data product or provider"
                placeholder="Search data product or provider"
                value={query}
                onChange={e => setQuery(e.target.value)}
                className="flex-1 bg-transparent text-[26px] text-[#2c3032] outline-none placeholder:text-[#a2a4a4]"
              />
            </label>

            <section className="mt-[82px]">
              <SectionHeader title="Recently added">
                <a href="#" className="flex items-center gap-3 pr-2 text-[26px] font-medium text-[#2f6bdc]">
                  Browse the catalog
                  <MdArrowForward className="size-9" />
                </a>
              </SectionHeader>
              <div className="grid grid-cols-4 gap-12">
                {products.map(product => (
                  <ProductCard key={product.name} product={product} />
                ))}
              </div>
            </section>

            <section className="mt-16">
              <SectionHeader title="Categories">
                <Pager label="categories" />
              </SectionHeader>
              <div className="grid grid-cols-4 gap-12">
                {categories.map(category => (
                  <a
                    key={category.name}
                    href="#"
                    className="flex h-36 items-center gap-6 rounded-2xl border-2 border-[#e5e6e6] bg-white px-[30px]"
                  >
                    <span className={`flex size-20 items-center justify-center rounded-full ${category.color}`}>
                      {category.icon}
                    </span>
                    <span>
                      <span className="block text-[32px] leading-12 font-medium">{category.name}</span>
                      <span className="block text-[22px] leading-8 text-[#7d7f80]">{category.count} data products</span>
                    </span>
                  </a>
                ))}
              </div>
            </section>

            <section className="mt-16">
              <SectionHeader title="Providers">
                <Pager label="providers" />
              </SectionHeader>
              <div className="grid grid-cols-6 gap-12">
                {[1, 2, 3, 4, 5, 6].map(n => (
                  <div key={n} className="h-36 rounded-2xl border-2 border-[#e5e6e6] bg-white" />
                ))}
              </div>
            </section>
          </div>
        </main>
        {/* scroll thumb */}
        <div className="w-2.5 shrink-0">
          <div className="h-[60.5%] rounded-lg bg-[#dfe1e0]" />
        </div>
      </div>
    </div>
  );
}
